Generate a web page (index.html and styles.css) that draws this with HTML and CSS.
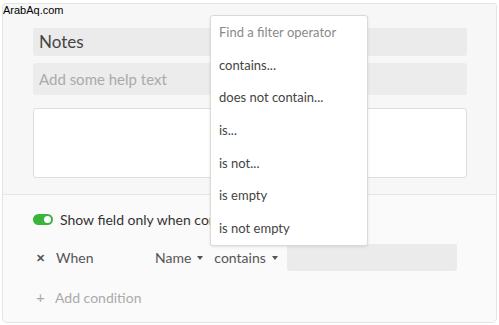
FILE: index.html
```html
<!DOCTYPE html>
<html lang="en">
<head>
  <meta charset="UTF-8" />
  <meta name="viewport" content="width=device-width, initial-scale=1.0"/>
  <title>Field settings</title>
  <link rel="stylesheet" href="styles.css">
</head>
<body>
  <div class="watermark">ArabAq.com</div>

  <div class="panel">
    <div class="fields">
      <div class="field-name">Notes</div>
      <div class="field-help">Add some help text</div>
      <div class="field-preview"></div>
    </div>

    <div class="conditions">
      <label class="toggle-row">
        <span class="toggle"><span class="knob"></span></span>
        <span>Show field only when conditions are met</span>
      </label>

      <div class="condition">
        <span class="remove">&#x2715;</span>
        <span class="when">When</span>
        <span class="select">Name</span>
        <span class="select operator">contains</span>
        <div class="value"></div>
      </div>

      <div class="add-condition">
        <span class="plus">+</span>
        <span>Add condition</span>
      </div>
    </div>

    <div class="menu">
      <div class="menu-item search">Find a filter operator</div>
      <div class="menu-item">contains...</div>
      <div class="menu-item">does not contain...</div>
      <div class="menu-item">is...</div>
      <div class="menu-item">is not...</div>
      <div class="menu-item">is empty</div>
      <div class="menu-item">is not empty</div>
    </div>
  </div>
</body>
</html>
```

FILE: styles.css
```css
body {
  margin: 0;
  background: #fff;
  font-family: Lato, "Open Sans", sans-serif;
  color: #444;
}
.watermark {
  position: absolute;
  top: 4px;
  left: 3px;
  font-family: "Liberation Sans", Arial, sans-serif;
  font-size: 11px;
  color: #000;
  z-index: 2;
}
.panel {
  position: relative;
  margin: 3px 2px 0 2px;
  height: 320px;
  box-sizing: border-box;
  border: 1px solid #e4e4e4;
  border-radius: 3px 3px 5px 5px;
  background: #fafafa;
  overflow: hidden;
}
.fields {
  background: #f7f7f7;
  padding: 24px 29px 16px 30px;
  border-bottom: 1px solid #e6e6e6;
  display: flex;
  flex-direction: column;
}
.field-name {
  height: 28px;
  line-height: 28px;
  background: #ebebeb;
  border-radius: 3px;
  padding-left: 6px;
  font-size: 17px;
  color: #444;
  margin-bottom: 7px;
}
.field-help {
  height: 32px;
  line-height: 32px;
  background: #ececec;
  border-radius: 3px;
  padding-left: 6px;
  font-size: 15px;
  color: #aaa;
  margin-bottom: 13px;
}
.field-preview {
  height: 70px;
  box-sizing: border-box;
  background: #fff;
  border: 1px solid #dedede;
  border-radius: 3px;
}
.conditions {
  padding: 14px 30px 0 30px;
  font-size: 14px;
}
.toggle-row {
  display: flex;
  align-items: center;
  gap: 7px;
  height: 20px;
  color: #333;
  white-space: nowrap;
}
.toggle {
  width: 20px;
  height: 11px;
  border-radius: 6px;
  background: #39b53c;
  position: relative;
  flex: none;
}
.knob {
  position: absolute;
  right: 2px;
  top: 2px;
  width: 7px;
  height: 7px;
  border-radius: 50%;
  background: #fff;
}
.condition {
  display: flex;
  align-items: center;
  height: 27px;
  margin-top: 15px;
  color: #555;
}
.remove {
  width: 20px;
  padding-left: 3px;
  font-size: 11px;
  font-weight: bold;
  color: #555;
}
.when {
  width: 99px;
}
.select {
  display: flex;
  align-items: center;
  margin-right: 11px;
}
.select.operator {
  margin-right: 9px;
}
.select::after {
  content: "";
  margin-left: 6px;
  border-left: 3px solid transparent;
  border-right: 3px solid transparent;
  border-top: 4px solid #555;
}
.value {
  width: 170px;
  height: 27px;
  background: #ebebeb;
  border-radius: 2px;
}
.add-condition {
  display: flex;
  align-items: center;
  height: 20px;
  margin-top: 16px;
  color: #aaa;
}
.plus {
  width: 19px;
  padding-left: 3px;
  font-size: 15px;
}
.menu {
  position: absolute;
  top: 11px;
  left: 207px;
  width: 158px;
  box-sizing: border-box;
  background: #fff;
  border: 1px solid #dadada;
  border-radius: 3px;
  box-shadow: 0 1px 3px rgba(0, 0, 0, 0.1);
}
.menu-item {
  height: 32.7px;
  line-height: 32.7px;
  padding-left: 8px;
  font-size: 13px;
  color: #444;
}
.menu-item.search {
  color: #8a8a8a;
}
```
